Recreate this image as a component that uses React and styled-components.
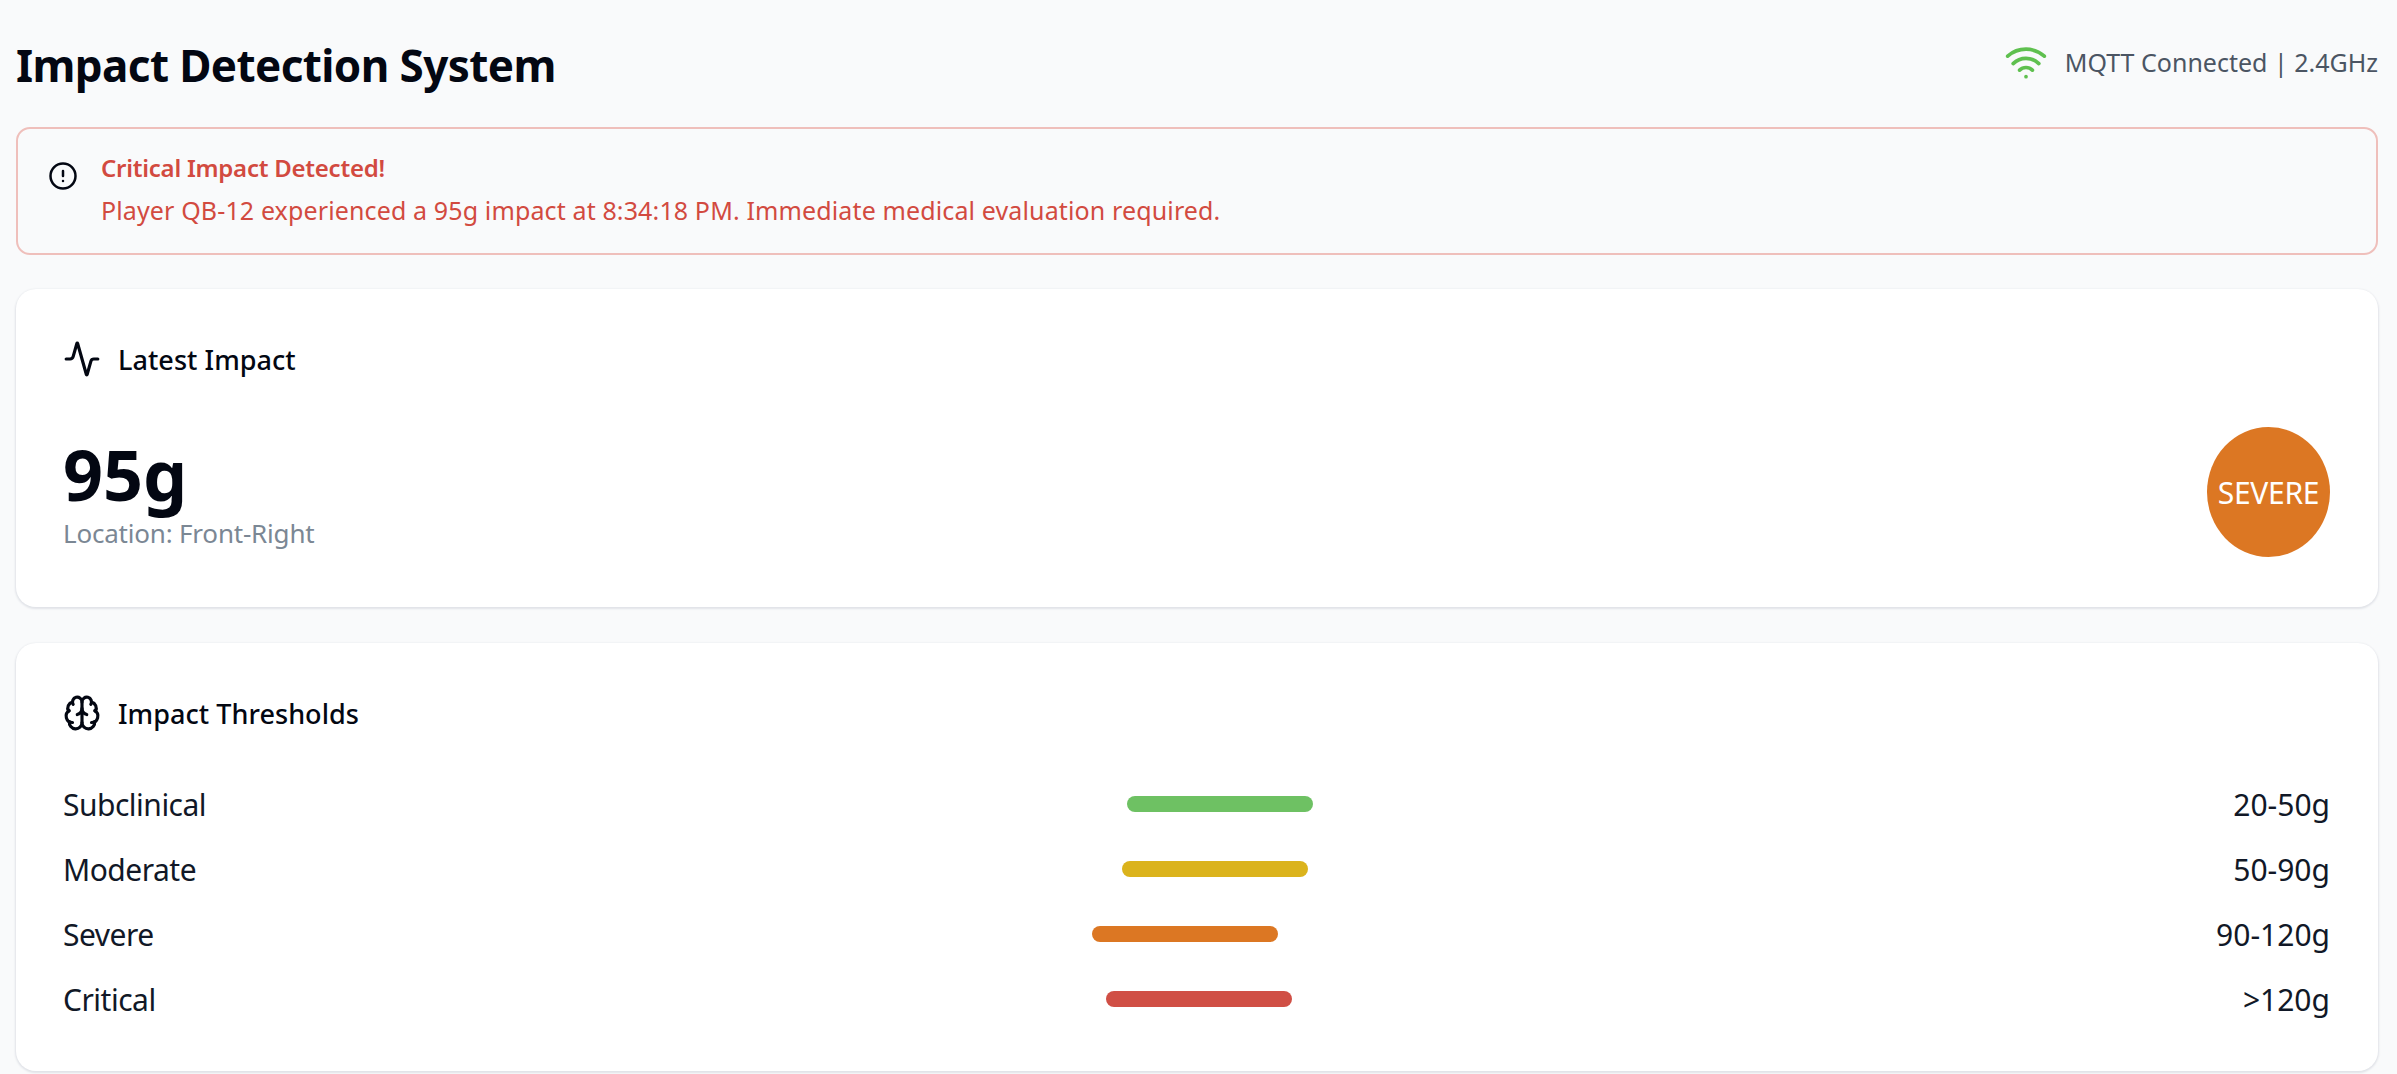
import styled, { createGlobalStyle } from 'styled-components'
import { Wifi, CircleAlert, Activity, Brain } from 'lucide-react'

const GlobalStyle = createGlobalStyle`
    * {
        box-sizing: border-box;
    }
    body {
        margin: 0;
        background-color: #f9fafb;
        font-family: "Noto Sans", "Open Sans", sans-serif;
        color: #030712;
    }
`;

const Page = styled.div`
    height: 1074px;
    overflow: hidden;
    padding: 0 19px 0 16px;
`;

const Header = styled.header`
    height: 127px;
    padding-top: 2px;
    display: flex;
    align-items: center;
    justify-content: space-between;
`;

const Title = styled.h1`
    margin: 0;
    font-size: 44px;
    font-weight: 700;
    letter-spacing: -0.6px;
`;

const Status = styled.div`
    display: flex;
    align-items: center;
    gap: 17px;
    margin-bottom: 6px;
    font-size: 25px;
    color: #4b5563;
    svg {
        color: #5fc04f;
    }
`;

const Alert = styled.div`
    height: 128px;
    margin-bottom: 34px;
    padding: 19px 30px;
    border: 2px solid #efbfbb;
    border-radius: 14px;
    display: flex;
    gap: 23px;
    color: #d24a40;
    svg {
        color: #030712;
        margin-top: 13px;
        flex-shrink: 0;
    }
`;

const AlertTitle = styled.div`
    font-size: 24px;
    font-weight: 600;
    line-height: 40px;
    letter-spacing: -0.25px;
`;

const AlertText = styled.div`
    font-size: 25px;
    line-height: 44px;
    letter-spacing: 0.13px;
`;

const Card = styled.section`
    height: ${props => props.h}px;
    margin-bottom: 36px;
    padding: 50px 48px 48px 47px;
    background-color: white;
    border-radius: 20px;
    box-shadow: 0 1px 2px 1px #e1e3e8;
`;

const CardHead = styled.div`
    display: flex;
    align-items: center;
    gap: 17px;
    height: 40px;
    font-size: 27px;
    font-weight: 500;
    letter-spacing: 0.05px;
`;

const ImpactRow = styled.div`
    margin-top: 48px;
    display: flex;
    align-items: center;
    justify-content: space-between;
`;

const Reading = styled.div`
    padding-top: 5px;
`;

const Force = styled.div`
    font-size: 70px;
    font-weight: 700;
    line-height: 72px;
`;

const Location = styled.div`
    font-size: 26px;
    line-height: 36px;
    margin-top: 5px;
    color: #7b8794;
    letter-spacing: -0.2px;
`;

const Badge = styled.div`
    width: 123px;
    height: 130px;
    border-radius: 50%;
    background-color: #dc7723;
    color: white;
    font-size: 30px;
    letter-spacing: -0.3px;
    display: flex;
    align-items: center;
    justify-content: center;
`;

const Rows = styled.div`
    margin-top: 49px;
    display: flex;
    flex-direction: column;
    gap: 21px;
`;

const Row = styled.div`
    height: 44px;
    display: flex;
    align-items: center;
    justify-content: space-between;
    font-size: 30px;
    letter-spacing: -0.5px;
    color: #111827;
`;

const Bar = styled.div`
    width: 186px;
    height: 16px;
    border-radius: 8px;
    background-color: ${props => props.color};
`;

const Range = styled.span`
    letter-spacing: 0;
`;

const thresholds = [
    { name: 'Subclinical', color: '#6ec163', range: '20-50g' },
    { name: 'Moderate', color: '#dbb31c', range: '50-90g' },
    { name: 'Severe', color: '#dc7723', range: '90-120g' },
    { name: 'Critical', color: '#d04f45', range: '>120g' },
]

const App = () => {
    return (
        <Page>
            <GlobalStyle />
            <Header>
                <Title>Impact Detection System</Title>
                <Status>
                    <Wifi size={44} strokeWidth={2} />
                    MQTT Connected | 2.4GHz
                </Status>
            </Header>
            <Alert>
                <CircleAlert size={30} strokeWidth={2} />
                <div>
                    <AlertTitle>Critical Impact Detected!</AlertTitle>
                    <AlertText>Player QB-12 experienced a 95g impact at 8:34:18 PM. Immediate medical evaluation required.</AlertText>
                </div>
            </Alert>
            <Card h={318}>
                <CardHead>
                    <Activity size={38} strokeWidth={2} />
                    Latest Impact
                </CardHead>
                <ImpactRow>
                    <Reading>
                        <Force>95g</Force>
                        <Location>Location: Front-Right</Location>
                    </Reading>
                    <Badge>SEVERE</Badge>
                </ImpactRow>
            </Card>
            <Card h={428}>
                <CardHead>
                    <Brain size={38} strokeWidth={2} />
                    Impact Thresholds
                </CardHead>
                <Rows>
                    {thresholds.map(item => (
                        <Row key={item.name}>
                            <span>{item.name}</span>
                            <Bar color={item.color} />
                            <Range>{item.range}</Range>
                        </Row>
                    ))}
                </Rows>
            </Card>
        </Page>
    )
}

export default App
